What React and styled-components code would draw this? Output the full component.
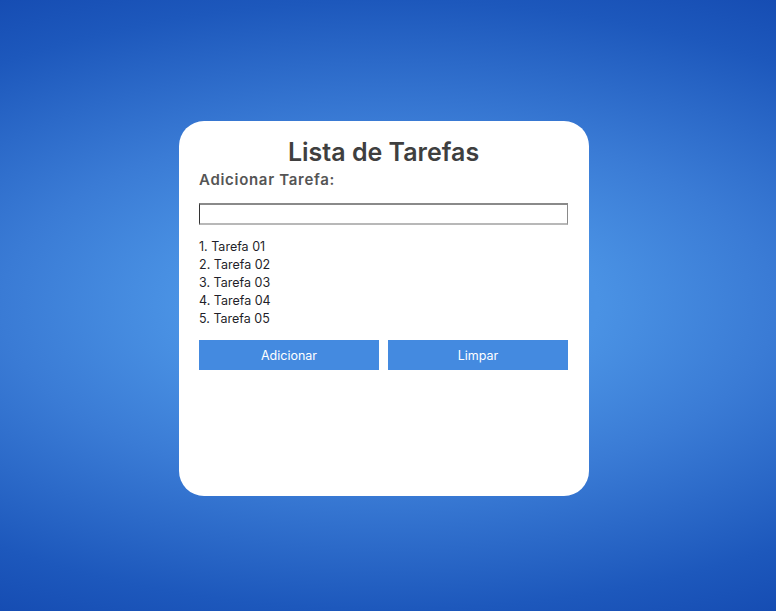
import React from 'react';
import styled, { createGlobalStyle } from 'styled-components';

const GlobalStyle = createGlobalStyle`
  html, body {
    margin: 0;
    padding: 0;
    height: 100%;
  }
  body {
    font-family: "Inter", "Noto Sans", sans-serif;
  }
`;

const Page = styled.div`
  width: 100vw;
  height: 100vh;
  display: flex;
  align-items: center;
  justify-content: center;
  background: radial-gradient(
    840px 400px at 50% 50%,
    #4c94e6 0%,
    #4a92e4 25%,
    #3a7bd5 46%,
    #1d58bc 76%,
    #164db3 89%,
    #1449b0 100%
  );
`;

const Card = styled.div`
  width: 410px;
  height: 375px;
  box-sizing: border-box;
  background: #fff;
  border-radius: 25px;
  padding: 14px 21px 20px 20px;
  display: flex;
  flex-direction: column;
  margin: 6px 8px 0 0;
`;

const Title = styled.h1`
  margin: 0;
  text-align: center;
  font-size: 25px;
  font-weight: 600;
  color: #3f3f3f;
  line-height: 34px;
`;

const Label = styled.label`
  font-size: 15px;
  font-weight: 600;
  letter-spacing: 0.7px;
  color: #555;
  line-height: 20px;
  margin-top: 1px;
`;

const Input = styled.input`
  margin-top: 13px;
  height: 22px;
  box-sizing: border-box;
  width: 100%;
  border-style: solid;
  border-width: 2px 1px 2px 1px;
  border-color: #8a8a8a #8a8a8a #b8b8b8 #333;
  padding: 0 4px;
  font-family: inherit;
`;

const List = styled.ol`
  margin: 13px 0 0 0;
  padding: 0;
  list-style: none;
  counter-reset: item;
`;

const Item = styled.li`
  font-size: 12.5px;
  line-height: 18px;
  color: #1f1f2a;
  counter-increment: item;
  &::before {
    content: counter(item) ". ";
  }
`;

const Actions = styled.div`
  margin-top: 12px;
  display: grid;
  grid-template-columns: 1fr 1fr;
  gap: 9px;
`;

const Button = styled.button`
  height: 30px;
  border: none;
  background: #448ae0;
  color: #fff;
  font-family: inherit;
  font-size: 12.5px;
  cursor: pointer;
`;

const tasks = ['Tarefa 01', 'Tarefa 02', 'Tarefa 03', 'Tarefa 04', 'Tarefa 05'];

const App = () => (
  <>
    <GlobalStyle />
    <Page>
      <Card>
        <Title>Lista de Tarefas</Title>
        <Label htmlFor="tarefa">Adicionar Tarefa:</Label>
        <Input id="tarefa" type="text" />
        <List>
          {tasks.map(t => (
            <Item key={t}>{t}</Item>
          ))}
        </List>
        <Actions>
          <Button>Adicionar</Button>
          <Button>Limpar</Button>
        </Actions>
      </Card>
    </Page>
  </>
);

export default App;
